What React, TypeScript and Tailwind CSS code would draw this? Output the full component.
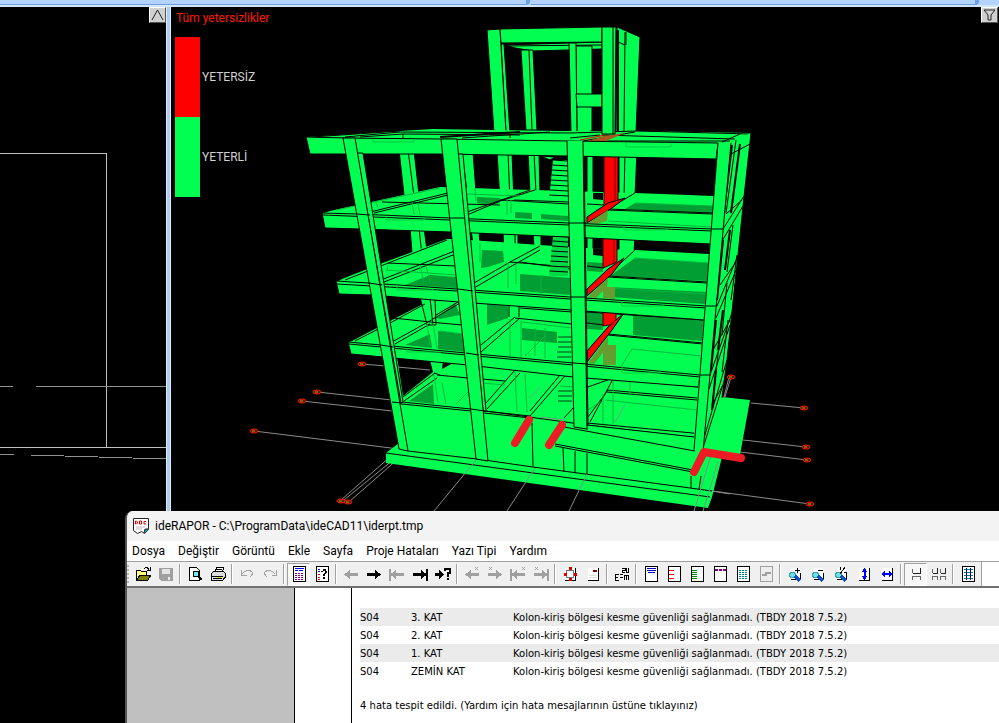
import type { ReactNode } from 'react'

const G = '#00ff50'
const DK = '#009e33'

function Face({ p, f = G, s = '#000' }: { p: string; f?: string; s?: string }) {
  return <polygon points={p} fill={f} stroke={s} strokeWidth={1} strokeLinejoin="round" />
}
function Seg({ d, c = '#000', w = 1 }: { d: string; c?: string; w?: number }) {
  return <path d={d} fill="none" stroke={c} strokeWidth={w} />
}

const nodes = [
  [362, 364], [317, 392], [302, 401], [254, 431], [731, 377],
  [804, 408], [806, 447], [807, 460], [810, 504], [341, 501], [348, 502],
]

function Building() {
  return (
    <svg viewBox="171 7 828 504" className="block w-full" role="img" aria-label="3B yapı modeli">
      {/* axis lines */}
      <Seg c="#8a8a8a" d="M362 364L432 370M317 392L392 400M302 401L392 411M254 431L399 449M341 500L399 449M344 500L404 451M350 501L406 452M751 403L804 408M743 440L806 447M740 452L807 460M712 491L810 504M731 377L725 397M729 377L724 397" />

      {/* roof tower */}
      <Face p="505,45 602,42 602,49 533,51 515,48" />
      <Seg d="M505 46L602 45" />
      <Face p="521,50 533,50 537,130 526,130" />
      <Seg d="M529 50L532 130" />
      <Face p="576,46 592,46 592,131 577,133" />
      <Face p="569,43 576,43 577,133 571,133" />
      <Face p="576,94 602,94 602,107 577,107" />
      <Face p="501,44 504,44 510,133 506,133" />
      <Face p="487,30 500,29 506,133 494,133" />
      <Face p="500,29 602,27 602,42 501,43" />
      <Face p="617,27 640,37 636,132 616,134" />
      <Seg w={2} d="M618 30L618 134" />
      <Seg d="M625 32L624 133M618 42L625 45M626 32L626 45" />

      {/* storey 4, rear frame */}
      <Face p="399,150 414,150 420,204 405,204" />
      <Seg d="M408 150L415 204" />
      <Face p="462,152 473,152 476,192 467,192" />
      <Face p="497,152 512,152 514,202 500,202" />
      <Seg d="M508 152L510 202" />
      <Face p="528,152 539,152 540,194 530,194" />
      <Seg d="M534 152L536 194" />
      <Face p="587,150 593,150 593,194 587,194" />
      <Face p="619,150 637,150 635,196 619,200" />
      <Seg d="M625 150L624 200" />

      {/* floor 3 deck */}
      <polygon fill={G} points="323,213 330,211 440,187 500,189 603,192 635,193 714,196 712,230 450,219 330,214" />
      <polygon fill={DK} points="477,197 500,198 500,203 490,205 477,203" />
      <polygon fill={DK} points="635,203 714,206 713,214 625,209" />
      <polygon fill={DK} points="515,212 532,213 532,219 515,218" />
      <polygon fill={DK} points="541,214 568,216 568,221 541,219" />
      <polygon fill="#000" points="593,193 603,193 603,200 593,199" />
      <Seg d="M370 212L448 193M374 213L448 195M382 202L500 205M467 215L500 201L535 190M467 212L530 190M514 200L569 202M587 204L604 205M608 209L712 213M608 210L712 214M635 193L608 209M500 200L569 204" />
      <Seg c="#00b83c" d="M375 201L378 207M412 202L414 214M418 203L420 215M608 221L712 227M467 194L520 196M635 203L714 206M475 188L476 201M507 200V215M511 200V213M336 210L440 188" />

      {/* storey 3, rear frame */}
      <Face p="410,228 424,228 429,265 413,265" />
      <Seg d="M419 228L423 265" />
      <Face p="471,230 479,230 480,244 473,244" />
      <Face p="503,231 518,231 518,264 504,264" />
      <Seg d="M515 231L515 264" />
      <Face p="533,233 541,233 541,247 534,247" />
      <Face p="587,235 593,235 593,250 587,250" />
      <Face p="619,236 635,236 634,252 619,266" />

      {/* floor 2 deck */}
      <polygon fill={G} points="337,282 342,279 380,264 447,239 456,239 540,245 603,249 635,250 709,254 707,307 460,290" />
      <polygon fill={DK} points="430,275 456,277 457,288 405,285" />
      <polygon fill={DK} points="482,250 503,251 504,262 488,267 481,268" />
      <polygon fill={DK} points="520,274 570,278 570,295 520,291" />
      <polygon fill={DK} points="635,258 709,263 708,281 610,276" />
      <polygon fill={DK} points="610,287 706,292 705,304 610,297" />
      <polygon fill={DK} points="587,262 603,263 603,272 587,271" />
      <polygon fill="#000" points="593,248 603,249 603,256 593,255" />
      <Seg d="M345 280L447 240M381 280L457 250M384 282L458 253M388 263L456 266M474 283L510 262L540 246M474 288L510 267L540 250M510 262L570 267M520 262L570 269M587 266L604 268M608 276L707 282M608 277L707 283M635 250L600 282" />
      <Seg c="#00b83c" d="M388 265L387 270M420 265L424 283M426 265L430 283M608 288L706 294M635 258L709 263M508 263V288M516 263V284M541 275V294M386 270L456 275M480 243V262" />

      {/* storey 2 and floor 1 deck */}
      <polygon fill={G} points="349,342 352,341 392,320 425,303 456,297 570,302 704,310 700,376 466,354" />
      <polygon fill="#000" points="383,297 421,299 423,303 388,320" />
      <Face p="420,297 435,299 436,325 427,325" />
      <Seg d="M430 298L433 325" />
      <polygon fill={DK} points="436,318 455,303 460,315 440,319" />
      <polygon fill={DK} points="438,331 464,334 466,352 438,349" />
      <polygon fill={DK} points="405,345 430,334 432,348" />
      <polygon fill={DK} points="487,303 508,304 508,318 487,325" />
      <polygon fill={DK} points="522,328 557,332 557,343 522,340" />
      <polygon fill={DK} points="633,314 704,320 702,341 633,335" />
      <polygon fill={DK} points="587,312 603,313 603,330 587,329" />
      <Seg d="M355 341L392 322L425 304M392 342L428 322L460 303M395 344L430 324M393 318L440 323L462 325M436 315L458 302M481 345L515 317M481 352L520 318M509 304V317M519 304V317M520 308L572 312M515 318L572 324M587 323L604 325M608 334L703 343M608 335L703 344M587 312L704 320" />
      <Seg c="#00b83c" d="M427 323L430 346M433 323L437 348M510 319V356M521 320V358M535 328V356M545 328V358M632 349L702 356M632 349L615 376M440 331L464 334M522 322L572 328M525 356L545 336" />

      {/* storey 1 */}
      <polygon fill={G} points="393,355 466,362 700,375 703,438 392,402" />
      <polygon fill="#000" points="397,357 430,360 433,372 403,396" />
      <Seg c="#8a8a8a" d="M397 367L430 370" />
      <polygon fill={DK} points="433,384 434,404 409,401" />
      <polygon fill="#000" points="443,361 455,362 442,369" />
      <Seg d="M403 397L435 373M404 401L437 378M437 375L468 378M482 379L505 381M434 373L440 375M486 403L515 370M487 409L520 373M530 411L560 375M530 416L565 376M564 418L574 407M588 387L613 378M588 417L608 390M590 422L613 379M607 390L697 398M607 392L697 400M607 378L698 387" />
      <Seg c="#00b83c" d="M434 375L438 403M442 383L446 404M456 404L470 390M515 372L517 412M525 374L527 412M605 400L697 410M603 394V425M613 380V424M630 380V394M588 410L600 402M482 383L505 385M560 386L572 387" />
      <Seg c="#7b9b80" d="M529 399L540 387M540 417L565 420M615 422L625 405" />

      {/* stairs */}
      {[160, 236].map((y, n) => (
        <g key={y}>
          <polygon fill={n ? '#00d845' : G} points={`553,${y} 568,${y} 568,${y + 40} 549,${y + 40}`} />
          {[0, 5, 10, 15, 20, 25, 30, 35].map((k) => (
            <Seg key={k} d={`M${553 - k / 10} ${y + k}L568 ${y + k + 1}`} />
          ))}
        </g>
      ))}
      <Face p="540,156 550,160 555,157" />
      <Seg c={DK} w={2} d="M558 280H570M558 285H571M557 290H571M558 337H571M558 342H571M558 347H571M557 352H571M557 357H571M558 391H572M558 396H572M558 401H572" />

      {/* failing column and beams */}
      <g>
        <Face f="#ff0000" s="#300" p="604,150 618,150 618,200 604,206" />
        <Seg c="#700" d="M615 150V203" />
        <Face f="#ff0000" p="587,217 608,203 625,198 612,208 587,223" />
        <polygon fill="#649d30" points="588,223 608,210 607,221 596,224" />
        <Face f="#ff0000" s="#300" p="603,238 617,238 617,262 603,268" />
        <Seg c="#700" d="M614 238V265" />
        <Face f="#ff0000" p="587,289 608,269 624,258 612,274 587,296" />
        <polygon fill="#649d30" points="588,297 608,278 607,287 596,298" />
        <polygon fill="#649d30" points="603,287 615,287 615,299 603,298" />
        <Face f="#ff0000" s="#300" p="603,311 616,312 616,324 603,326" />
        <Face f="#ff0000" p="587,351 608,327 624,313 612,330 587,362" />
        <polygon fill="#649d30" points="588,363 608,337 608,346 594,364" />
        <polygon fill="#649d30" points="603,345 616,345 616,365 603,365" />
        <Seg c="#e01010" w={2} d="M604 378L614 379" />
      </g>

      {/* roof deck */}
      <polygon fill={G} points="307,137 400,131 433,129 560,131 637,131 751,133 731,143 583,142" />
      <Seg w={2} d="M440 137L520 132" />
      <Seg d="M312 137L400 131M345 137L400 132L570 133L637 131L751 134M360 137L403 134L520 135M403 134V138M462 138L550 132M583 141L635 132M590 141L730 141M602 135L735 139M740 134L722 142M570 138L600 135M510 134V138" />
      <polygon fill="#a85a1e" points="588,141 604,136 625,133 606,141" />
      <Seg c="#e00" d="M580 140L605 135" />
      <Face p="602,27 616,27 615,134 602,134" />
      <Seg d="M613 27V134" />

      {/* foundation, right apron */}
      <polygon fill={G} points="722,397 750,400 740,455 722,457 712,497 708,508 386,463 386,453 399,443 700,440" />

      {/* right facade */}
      <polygon fill={G} points="731,142 751,133 744,197 738,255 733,300 727,360 722,398 702,452" />
      <Seg w={2} d="M732 145L722 228M723 240L717 300M716 320L711 370M740 144L731 213M730 230L725 270M723 310L718 350M716 370L712 410" />
      <Seg d="M751 133L744 197L738 255L727 360L722 398M731 154L750 144M723 229L744 196M722 241L743 206M726 214L742 200M717 306L738 255M716 318L737 268M720 285L736 262M710 375L733 310M709 389L730 325M713 350L730 320M704 438L727 360M703 448L726 375M712 405L723 385M736 140L726 213M733 225L727 272M737 255L731 300M727 283L722 335M728 320L722 372M719 345L713 400" />

      {/* ground storey walls */}
      <polygon fill={G} points="392,401 471,409 587,425 703,438 699,489 590,476 399,449" />
      <Seg d="M392 401L471 409L587 425L703 438M392 403L471 411M484 411L530 416M484 413L530 418M587 423L703 434M564 427L695 451M555 444L693 470M555 446L693 472M532 423L533 467M563 448L564 472M575 451V473M587 453V474M691 476V488M701 476L699 489M408 451L477 459L533 467L690 488L712 491M386 453L710 497" />

      {/* front beams */}
      <Face p="306,137 345,138 442,139 567,141 718,143 716,159 567,156 442,154 310,154" />
      <Face p="322,213 357,214 450,218 569,223 712,229 711,244 569,237 451,232 359,229 325,228" />
      <Face p="336,281 369,283 457,289 570,297 706,306 704,320 571,310 459,302 371,295 339,294" />
      <Face p="348,342 381,345 466,353 573,363 700,375 698,387 573,377 468,365 383,357 351,354" />
      <Seg d="M323 215L450 220L569 225L712 231M337 284L457 291L570 299L706 308M349 344L466 355L573 365L700 377" />
      <Seg c="#00cc40" d="M373 139V142H414V139M386 216V220H424V218M397 286V290H433V288M626 143V147H671V144M624 226V230H667V229M622 301V306H663V304M622 367V373H660V371M407 348V352H441V351" />

      {/* front columns */}
      <Face p="357,153 363,153 403,402 401,403" />
      <Face p="457,154 463,154 486,411 483,411" />
      <Face p="583,156 584,156 588,425 587,425" />
      <Face p="343,138 355,138 408,451 399,449" />
      <Face p="441,139 457,139 488,461 476,459" />
      <polygon fill={G} points="567,141 583,141 587,426 574,425" />
      <Seg d="M567 141L574 427M583 141L587 430M574 427L587 429" />
      <polygon fill={G} points="718,143 731,143 703,450 693,450" />
      <Seg d="M718 143L694 450M731 143L703 452" />
      <Seg d="M357 214L370 215M369 283L382 285M381 345L393 347M392 402L402 403M450 218H465M458 289L473 291M466 353L479 355M471 409L485 411M569 223H586M571 297H587M573 363L588 364M712 229H724M706 306H717M700 375H711" />

      {/* axes crossing the foundation */}
      <Seg c="#8a8a8a" d="M476 460L434 511M535 468L507 511M587 474L569 511M711 455L694 511M718 462L703 511M712 491L730 494" />

      {nodes.map(([x, y]) => (
        <g key={`${x}-${y}`}>
          <ellipse cx={x} cy={y} rx={4} ry={2} fill="#501800" stroke="#ff1800" strokeWidth={1} />
          <path d={`M${x - 2} ${y}h3`} stroke="#c8a000" />
        </g>
      ))}

      <g stroke="#ed1c24" strokeWidth={8} strokeLinecap="round" strokeLinejoin="round" fill="none">
        <path d="M529 420L515 443" />
        <path d="M562 425L549 445" />
        <path d="M694 472L704 452L741 458" />
      </g>
    </svg>
  )
}

function Pix({ children }: { children: ReactNode }) {
  return (
    <svg width="16" height="16" viewBox="0 0 16 16" shapeRendering="crispEdges" fill="none" aria-hidden="true">
      {children}
    </svg>
  )
}

const K = '#000'
const S = '#a0a0a0'

const right = 'M1 7h8v-3l6 4.500l-6 4.500v-3h-8z'
const left = 'M15 7h-8v-3l-6 4.500l6 4.500v-3h8z'
const Arrow = ({ d, c }: { d: string; c: string }) => <path d={d} fill={c} />
const X = ({ x }: { x: number }) => <path d={`M${x} 1l3 3m0-3l-3 3`} stroke={S} />
const Page = ({ c = K, children }: { c?: string; children?: ReactNode }) => (
  <>
    <rect x="2" y="0" width="13" height="16" fill={c} />
    <rect x="3" y="1" width="11" height="14" fill={c === K ? '#fff' : '#eee'} />
    {children}
  </>
)
const Sheet = () => (
  <>
    <rect x="3" y="2" width="11" height="12" fill="#fff" />
    <path d="M13.500 2v13M3 14.500h11" stroke={K} />
  </>
)
const Lens = ({ children }: { children: ReactNode }) => (
  <>
    <path d="M4 2h9v11H4z" fill="#fff" />
    <path d="M13.500 7v7M4 13.500h9" stroke={K} />
    <path d="M3 6h4v1h1v3H7v1H3v-1H2V7h1z" fill="#70e0e8" stroke="#38a0a8" />
    <path d="M8 10l5 5" stroke="#1050c0" strokeWidth="3" />
    {children}
  </>
)
const Frame = ({ x, w }: { x: number; w: number }) => (
  <>
    <path d={`M${x + w} 2v5h-${w}`} stroke="#222" />
    <path d={`M${x} 3v4M${x} 14v-4h${w}v4`} stroke="#666" />
  </>
)

type Tool = { n: string; i: ReactNode; on?: boolean }
const groups: Tool[][] = [
  [
    { n: 'Aç', i: <><path d="M1.500 13.500v-9h4l1 1h5v3" fill="#ffff80" stroke={K} /><path d="M2 14l3-5h11l-3 5z" fill="#808000" stroke={K} /><path d="M9 3c2-2 4-2 5 1m1-3v3h-3" stroke={K} /></> },
    { n: 'Kaydet', i: <><path d="M1 2h14v13H3l-2-2z" fill={S} /><path d="M4 3h8v5H4z" fill="#e4e4e4" /><path d="M10 11h2v3h-2z" fill="#eee" /></> },
  ],
  [
    { n: 'Önizleme', i: <><path d="M2.500 1.500h7l3 3v10h-10z" fill="#fff" stroke={K} /><circle cx="9" cy="8" r="3" fill="#70e8f0" stroke={K} /><path d="M11 10l4 4" stroke={K} strokeWidth="2" /></> },
    { n: 'Yazdır', i: <><path d="M5 6l2-5h7l-2 6" fill="#fff" stroke={K} /><path d="M1.500 7.500l2-2h10l2 2v4l-3 3h-11z" fill="#ddd" stroke={K} /><path d="M2 10h11M3 12h9M7 3h5M6 5h5M13 14l2-3" stroke={K} /><path d="M8 11h3" stroke="#dd0" /></> },
  ],
  [
    { n: 'Geri al', i: <path d="M2.500 4v5h5M3 8c3-4 7-5 10-2c1 3-1 4-2 5" stroke={S} /> },
    { n: 'Yinele', i: <path d="M14.500 4v5h-5M13 8c-3-4-7-5-10-2c-1 3 1 4 2 5" stroke={S} /> },
  ],
  [
    { n: 'Rapor', on: true, i: <Page><path d="M4 2.500h9M4 4.500h3m1 0h4" stroke="#00f" /><path d="M4 7.500h9M4 9.500h9M4 11.500h9M4 13.500h9" stroke="#800080" strokeDasharray="2 1" /></Page> },
    { n: 'Rapor yardımı', i: <Page><path d="M4 3.500h2M4 5.500h2" stroke="#00f" /><path d="M4 8.500h2M4 11.500h2M4 13.500h2" stroke="#e00" /><path d="M7 5h2V3h3v2h1v2h-1v1h-1v2H9V8h1V7h1V5H9v1H7zM9 11h2v2H9z" fill={K} /></Page> },
  ],
  [
    { n: 'Önceki', i: <Arrow d={left} c={S} /> },
    { n: 'Sonraki', i: <Arrow d={right} c={K} /> },
    { n: 'İlk', i: <><Arrow d={left} c={S} /><path d="M1 3v12" stroke={S} strokeWidth="2" /></> },
    { n: 'Son', i: <><Arrow d={right} c={K} /><path d="M15 3v12" stroke={K} strokeWidth="2" /></> },
    { n: 'Sayfaya git', i: <><path d="M0 7h4v-3l5 4.500l-5 4.500v-3H0z" fill={K} /><path d="M10 5V3h5v4h-2v4M12 13h2" stroke={K} strokeWidth="2" /></> },
  ],
  [
    { n: 'Önceki hata', i: <><Arrow d={left} c={S} /><X x={11} /></> },
    { n: 'Sonraki hata', i: <><Arrow d={right} c={S} /><X x={2} /></> },
    { n: 'İlk hata', i: <><Arrow d={left} c={S} /><path d="M1 3v12" stroke={S} strokeWidth="2" /><X x={12} /></> },
    { n: 'Son hata', i: <><Arrow d={right} c={S} /><path d="M15 3v12" stroke={S} strokeWidth="2" /><X x={2} /></> },
  ],
  [
    { n: 'Kenar boşlukları', i: <><Sheet /><path d="M4.500 4.500h7v7h-7z" stroke="#777" /><path d="M7 1h3v3H7zM2 7h3v3H2zM12 7h3v3h-3zM7 12h3v3H7z" fill="#d00" /></> },
    { n: 'Pul', i: <><Sheet /><path d="M8 4h4v2H8z" fill="#800" /><path d="M4 9.500h7M4 11.500h7" stroke="#ddd" /></> },
  ],
  [{ n: 'Sayfa yönü', i: <path d="M5 8.500H1.500v6H5M1 11.500h3M6 8.500h3M6 11.500h3M8 2.500h3v2H8v2h3M14.500 2v4h-2V2M10 9.500h5M10.500 14V9M12.500 14V9M14.500 14V9" stroke={K} /> }],
  [
    { n: 'Üst bilgi', i: <Page><path d="M4 2.500h9M4 4.500h9M5 6.500h7" stroke="#00c" /></Page> },
    { n: 'Sol satırlar', i: <Page><path d="M3 4.500h5M3 8.500h5M3 12.500h5" stroke="#f00" /></Page> },
    { n: 'Sol sütun', i: <Page><path d="M3 4.500h5M3 6.500h5M3 8.500h5M3 10.500h5M3 12.500h5" stroke="#080" /></Page> },
    { n: 'Bölme', i: <Page><path d="M3 4h11" stroke="#800080" strokeWidth="2" strokeDasharray="3 1" /></Page> },
    { n: 'Izgara', i: <Page><path d="M4 4.500h9M4 6.500h9M4 8.500h9M4 10.500h9M4 12.500h9" stroke="#088" strokeDasharray="2 1" /></Page> },
    { n: 'Grafik', i: <Page c={S}><path d="M4 9h4V7h5" stroke={S} strokeWidth="2" /></Page> },
  ],
  [
    { n: 'Yakınlaştır', i: <Lens><path d="M8 4.500h5M10.500 2v5" stroke={K} /></Lens> },
    { n: 'Uzaklaştır', i: <Lens><path d="M8 4.500h5" stroke={K} /></Lens> },
    { n: 'Yarım ölçek', i: <Lens><path d="M7 8l5-7M7.500 1v3M11 6.500h3" stroke={K} /></Lens> },
    { n: 'Sayfa boyu', i: <><Sheet /><path d="M8.500 2l3 4h-2v4h2l-3 4l-3-4h2V6h-2z" fill="#00f" /></> },
    { n: 'Sayfa eni', i: <><Sheet /><path d="M2 8l4-3v2h4V5l4 3l-4 3V9H6v2z" fill="#00f" /></> },
  ],
  [
    { n: 'Tek sayfa', on: true, i: <Frame x={4.5} w={8} /> },
    { n: 'Çift sayfa', i: <><Frame x={1.5} w={5} /><Frame x={9.5} w={5} /></> },
  ],
  [{ n: 'Tablo', i: <Page><path d="M4 3.500h9M4 6.500h9M4 9.500h9M4 12.500h9" stroke="#088" /><path d="M6.500 2v12M10.500 2v12" stroke="#008" /></Page> }],
]

const menu = ['Dosya', 'Değiştir', 'Görüntü', 'Ekle', 'Sayfa', 'Proje Hataları', 'Yazı Tipi', 'Yardım']
const rows = ['3. KAT', '2. KAT', '1. KAT', 'ZEMİN KAT']

function ReportWindow() {
  return (
    <section className="absolute bottom-0 left-[125px] right-0 top-[511px] flex flex-col overflow-hidden rounded-tl-lg border-l-2 border-[#555] bg-white font-[Roboto,'Noto_Sans',sans-serif] text-black">
      <header className="flex h-[30px] shrink-0 items-center gap-1.5 bg-[#f3f3f3] pl-1.5">
        <svg width="16" height="16" viewBox="0 0 16 16" aria-hidden="true">
          <path d="M.5 .5h15v11l-4 4l-3-2l-4 2l-4-3z" fill="#fff" stroke="#222" />
          <path d="M2.500 3v3h1l1-1v-1l-1-1zM6.500 3h2v3h-2zM13 3.500h-2v2.500h2" fill="none" stroke="#e00000" />
          <path d="M3 9h9M3 11h6" stroke="#bbb" />
          <path d="M11 15l1-4h4" fill="#0aa" stroke="#222" />
        </svg>
        <h1 className="text-xs">ideRAPOR - C:\ProgramData\ideCAD11\iderpt.tmp</h1>
      </header>
      <nav className="flex h-5 shrink-0 items-center gap-[13px] bg-white pl-[5px] text-xs">
        {menu.map((m) => (
          <button key={m} type="button" className="leading-5">{m}</button>
        ))}
      </nav>
      <div className="flex h-[27px] shrink-0 border-b-2 border-t border-b-[#707070] border-t-[#a0a0a0] bg-white">
        <div role="toolbar" aria-label="Araçlar" className="flex items-center bg-[#f0f0f0] pr-0.5">
          <span className="mr-0.5 h-[18px] border-l-2 border-dotted border-[#b8b8b8]" />
          {groups.map((g, i) => (
            <div key={g[0].n} className="flex items-center">
              {i > 0 && <span className="mx-0.5 h-5 w-0.5 border-l border-r border-l-[#a0a0a0] border-r-white" />}
              {g.map((t) => (
                <button
                  key={t.n}
                  type="button"
                  aria-label={t.n}
                  className={
                    t.on
                      ? 'flex h-[23px] w-[23px] items-center justify-center border border-b-white border-l-[#a0a0a0] border-r-white border-t-[#a0a0a0] bg-[#f7f7f7]'
                      : 'flex h-[23px] w-[23px] items-center justify-center'
                  }
                >
                  <Pix>{t.i}</Pix>
                </button>
              ))}
            </div>
          ))}
        </div>
        <div className="flex-1 border-l border-[#a0a0a0] bg-white" />
      </div>
      <div className="flex flex-1">
        <div className="w-[168px] shrink-0 border-r border-black bg-[#c0c0c0]" />
        <div className="w-14 shrink-0" />
        <article className="flex-1 border-l border-black pl-2 pt-5 font-['DejaVu_Sans',sans-serif] text-[10px]">
          <table className="w-full border-collapse text-left">
            <tbody>
              {rows.map((r) => (
                <tr key={r} className="h-[18px] odd:bg-[#ebebeb]">
                  <td className="w-[51px]">S04</td>
                  <td className="w-[102px]">{r}</td>
                  <td>Kolon-kiriş bölgesi kesme güvenliği sağlanmadı. (TBDY 2018 7.5.2)</td>
                </tr>
              ))}
            </tbody>
          </table>
          <p className="mt-[18px]">4 hata tespit edildi. (Yardım için hata mesajlarının üstüne tıklayınız)</p>
        </article>
      </div>
    </section>
  )
}

const corner = 'flex h-4 w-[17px] items-center justify-center border border-b-[#555] border-l-white border-r-[#555] border-t-white bg-[#d0d0d0]'

export default function App() {
  return (
    <main className="relative flex h-screen flex-col overflow-hidden bg-black">
      <div className="flex h-[7px] shrink-0 border-b-2 border-[#d4e6fa] bg-[#b4d3fb]">
        <span className="w-[530px] rounded-br border-b border-r-4 border-[#6f9fe0]" />
        <span className="ml-px flex-1 rounded-br border-b border-r-4 border-[#6f9fe0]" />
        <span className="w-5" />
      </div>
      <div className="flex min-h-0 flex-1">
        <section className="relative w-[166px] shrink-0">
          <svg viewBox="0 7 166 716" className="block w-full" shapeRendering="crispEdges" fill="none" aria-label="Plan" role="img">
            <path d="M0 153.500H106.500V447M0 447.500H166" stroke="#c0c0c0" />
            <path d="M0 386.500H13M36 386.500H166M0 454.500H14M30 455L166 459" stroke="#909090" />
          </svg>
          <button type="button" aria-label="Yukarı" className={`${corner} absolute right-0 top-0`}>
            <svg width="13" height="12" viewBox="0 0 13 12" fill="none" stroke="#222"><path d="M1 11L6.500 1L12 11" /></svg>
          </button>
        </section>
        <div className="w-[5px] shrink-0 border-x border-[#dceafa] bg-[#b0cdf0]" />
        <section className="relative min-w-0 flex-1">
          <Building />
          <div className="absolute left-1 top-0 font-[Roboto,'Noto_Sans',sans-serif] text-xs text-[#d0d0d0]">
            <h2 className="h-[30px] pl-px leading-[22px] text-[#ff1a00]">Tüm yetersizlikler</h2>
            <ul>
              <li className="flex h-20 items-center gap-0.5"><span className="h-full w-[25px] bg-[#ff0000]" />YETERSİZ</li>
              <li className="flex h-20 items-center gap-0.5"><span className="h-full w-[25px] bg-[#00ff50]" />YETERLİ</li>
            </ul>
          </div>
          <button type="button" aria-label="Süz" className={`${corner} absolute right-px top-0`}>
            <svg width="13" height="12" viewBox="0 0 13 12" fill="none" stroke="#222"><path d="M1 1h11L8 6v5H5V6z" /></svg>
          </button>
        </section>
      </div>
      <ReportWindow />
    </main>
  )
}
